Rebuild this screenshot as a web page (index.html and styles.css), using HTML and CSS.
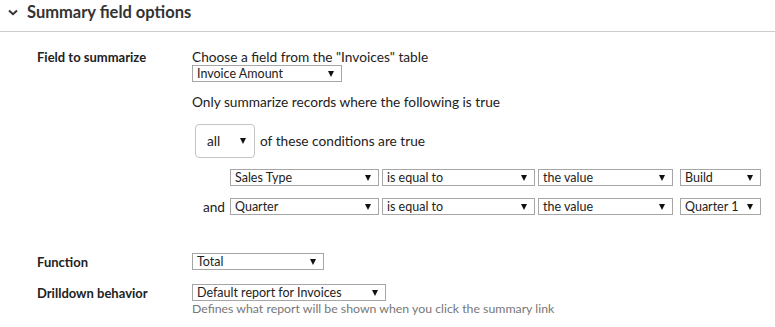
FILE: index.html
```html
<!DOCTYPE html>
<html lang="en">
<head>
  <meta charset="UTF-8" />
  <title>Summary field options</title>
  <link rel="stylesheet" href="styles.css">
</head>
<body>
  <div class="section-header">
    <svg class="chevron" width="10" height="7" viewBox="0 0 10 7"><path d="M1 1.5 L5 5.2 L9 1.5" fill="none" stroke="#333" stroke-width="2"/></svg>
    <h2>Summary field options</h2>
  </div>

  <div class="options">
    <div class="opt-row first">
      <div class="opt-label">Field to summarize</div>
      <div class="opt-content">
        <div class="line">Choose a field from the "Invoices" table</div>
        <div class="select w-invoice"><span>Invoice Amount</span><i class="arrow"></i></div>
        <div class="line gap-only">Only summarize records where the following is true</div>

        <div class="match-row">
          <div class="select big"><span>all</span><i class="arrow"></i></div>
          <span>of these conditions are true</span>
        </div>

        <div class="cond-row first-cond">
          <span class="cond-prefix"></span>
          <div class="select w-field"><span>Sales Type</span><i class="arrow"></i></div>
          <div class="select w-op"><span>is equal to</span><i class="arrow"></i></div>
          <div class="select w-type"><span>the value</span><i class="arrow"></i></div>
          <div class="select w-value"><span>Build</span><i class="arrow"></i></div>
        </div>
        <div class="cond-row">
          <span class="cond-prefix">and</span>
          <div class="select w-field"><span>Quarter</span><i class="arrow"></i></div>
          <div class="select w-op"><span>is equal to</span><i class="arrow"></i></div>
          <div class="select w-type"><span>the value</span><i class="arrow"></i></div>
          <div class="select w-value"><span>Quarter 1</span><i class="arrow"></i></div>
        </div>
      </div>
    </div>

    <div class="opt-row function">
      <div class="opt-label">Function</div>
      <div class="opt-content">
        <div class="select w-total"><span>Total</span><i class="arrow"></i></div>
      </div>
    </div>

    <div class="opt-row drilldown">
      <div class="opt-label">Drilldown behavior</div>
      <div class="opt-content">
        <div class="select w-drill"><span>Default report for Invoices</span><i class="arrow"></i></div>
        <div class="hint">Defines what report will be shown when you click the summary link</div>
      </div>
    </div>
  </div>
</body>
</html>
```

FILE: styles.css
```css
* {
  margin: 0;
  padding: 0;
  box-sizing: border-box;
}
body {
  font-family: 'Lato', 'Liberation Sans', sans-serif;
  font-size: 13.7px;
  line-height: 16px;
  color: #222;
  background: #fff;
}
.section-header {
  display: flex;
  align-items: center;
  height: 32px;
  padding: 0 0 8px 8px;
  border-bottom: 1px solid #ccc;
}
.chevron {
  margin-right: 9px;
  margin-top: 2px;
}
.section-header h2 {
  font-size: 16.5px;
  font-weight: 700;
  color: #333;
}
.options {
  padding-left: 37px;
}
.opt-row {
  display: flex;
}
.opt-row.first {
  margin-top: 17px;
}
.opt-row.function {
  margin-top: 38px;
  align-items: center;
}
.opt-row.drilldown {
  margin-top: 14px;
}
.opt-label {
  width: 155px;
  flex-shrink: 0;
  font-size: 13px;
  font-weight: 700;
  color: #222;
}
.drilldown .opt-label {
  padding-top: 1px;
}
.line {
  color: #222;
}
.gap-only {
  margin-top: 12px;
}
.select {
  display: flex;
  align-items: center;
  justify-content: space-between;
  height: 17px;
  padding: 0 7px 0 4px;
  border: 1px solid #a6a6a6;
  background: #fff;
  color: #222;
  font-size: 12.5px;
  white-space: nowrap;
}
.arrow {
  width: 0;
  height: 0;
  border-left: 3.5px solid transparent;
  border-right: 3.5px solid transparent;
  border-top: 6px solid #111;
}
.w-invoice { width: 150px; }
.w-total { width: 132px; }
.w-drill { width: 194px; }
.w-field { width: 149px; }
.w-op { width: 153px; margin-left: 3px; }
.w-type { width: 135px; margin-left: 3px; }
.w-value { width: 81px; margin-left: 7px; }

.match-row {
  display: flex;
  align-items: center;
  margin-top: 14px;
  margin-left: 3px;
}
.select.big {
  width: 60px;
  height: 34px;
  border: 1px solid #c4c4c4;
  border-radius: 4px;
  padding: 0 8px 0 11px;
  margin-right: 5px;
  font-size: 13.7px;
}
.cond-row {
  display: flex;
  align-items: center;
  margin-top: 12px;
}
.cond-row.first-cond {
  margin-top: 11px;
}
.cond-prefix {
  width: 33px;
  text-align: right;
  margin-right: 5px;
}
.hint {
  color: #777;
  font-size: 12.3px;
}
```
